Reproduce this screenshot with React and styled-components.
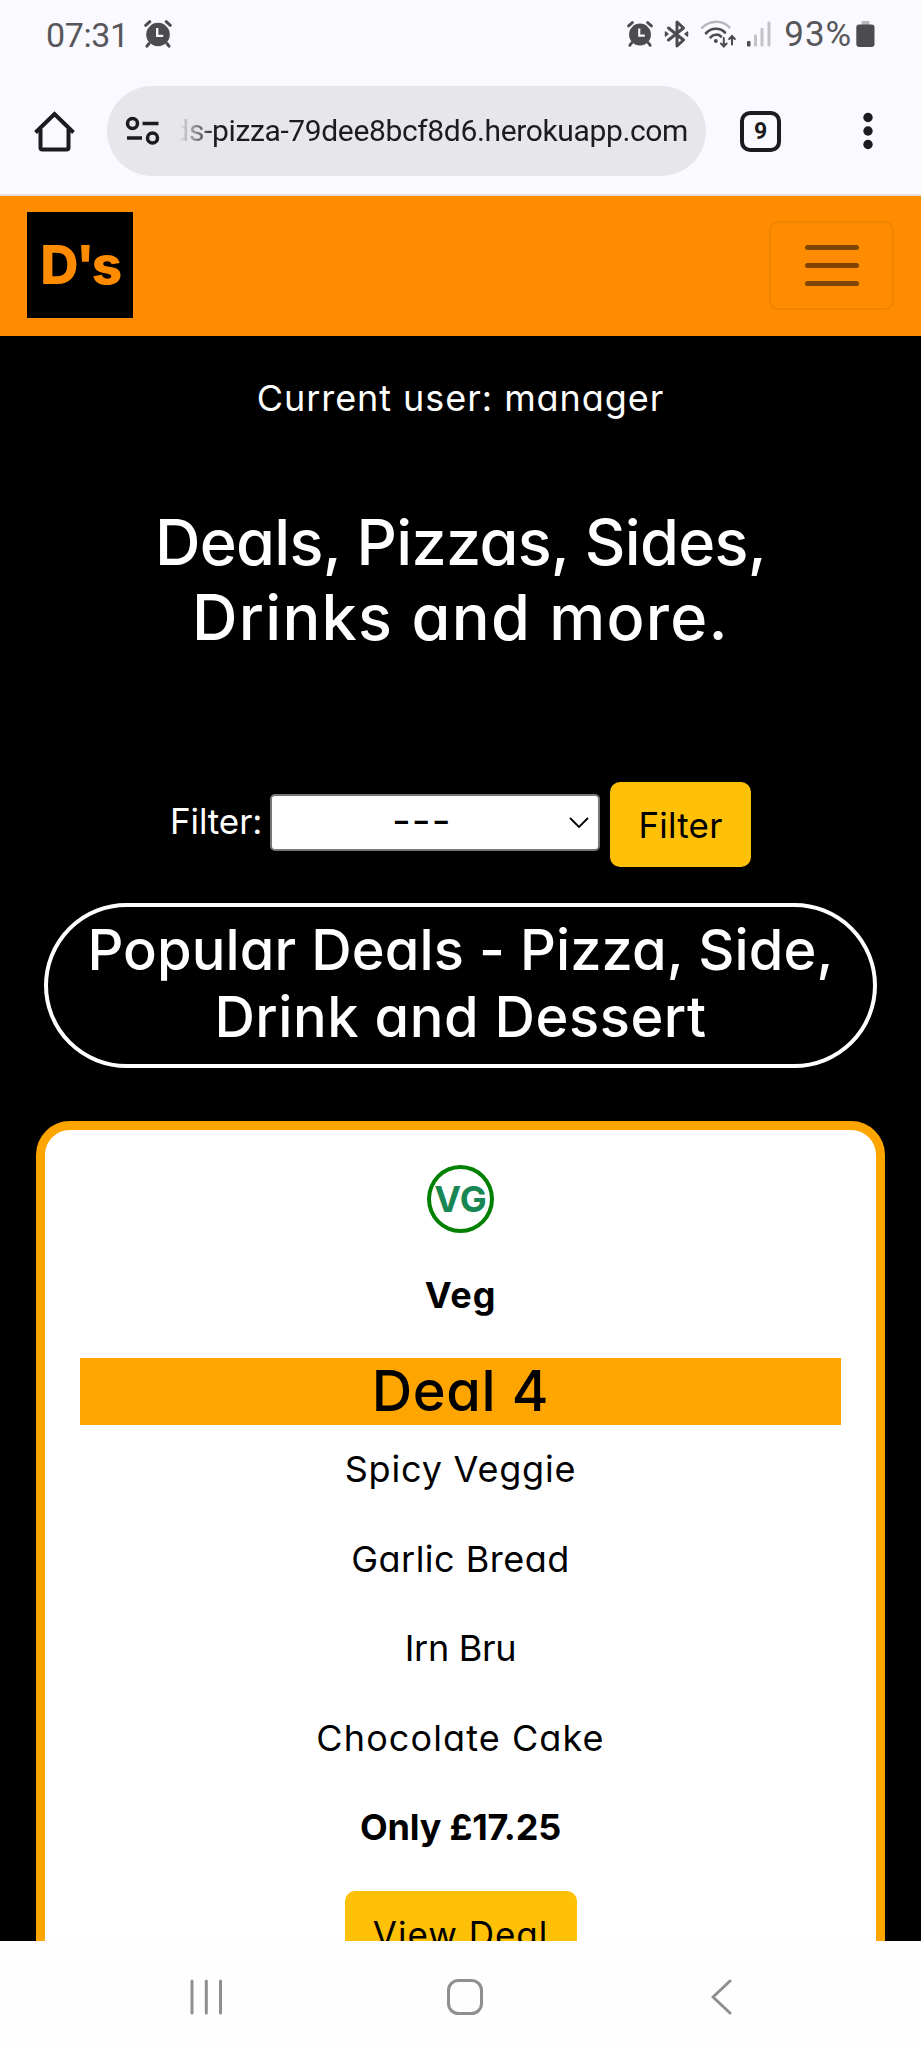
import React from 'react';
import styled, { createGlobalStyle } from 'styled-components';

const GlobalStyle = createGlobalStyle`
  * { box-sizing: border-box; }
  body { margin: 0; background: #000; }
`;

const Phone = styled.div`
  width: 921px;
  height: 2048px;
  display: flex;
  flex-direction: column;
  overflow: hidden;
  background: #000;
  font-family: Inter, 'Open Sans', sans-serif;
  font-feature-settings: 'cv11';
`;

const StatusBar = styled.header`
  height: 68px;
  flex: none;
  display: flex;
  align-items: center;
  padding: 0 46px;
  background: #faf9ff;
  color: #57575b;
  svg { display: block; flex: none; }
`;

const StatusText = styled.span`
  font: 400 ${(p) => p.$size}px/68px Roboto, sans-serif;
  letter-spacing: ${(p) => p.$track}px;
  margin: 0 ${(p) => p.$after}px 0 ${(p) => p.$before}px;
  padding-top: 1px;
  white-space: nowrap;
`;

const Spacer = styled.span`
  flex: 1;
`;

const StatusIcons = styled.div`
  display: flex;
  align-items: center;
  gap: 11px;
`;

const BrowserBar = styled.div`
  height: 128px;
  flex: none;
  display: flex;
  align-items: flex-start;
  padding: 18px 33px 0 34px;
  background: #faf9ff;
  border-bottom: 2px solid #eaddda;
  color: #1c1b20;
`;

const IconSlot = styled.div`
  width: ${(p) => p.$width}px;
  height: 90px;
  display: flex;
  align-items: center;
  svg { display: block; }
`;

const AddressPill = styled.div`
  width: 599px;
  height: 90px;
  display: flex;
  align-items: center;
  padding: 0 18px 0 18px;
  border-radius: 45px;
  background: #e7e6eb;
`;

const UrlText = styled.div`
  width: 519px;
  margin-left: 9px;
  display: flex;
  justify-content: flex-end;
  white-space: nowrap;
  font: 400 30px/44px Roboto, sans-serif;
  letter-spacing: ${(p) => p.$track}px;
  mask-image: linear-gradient(to right, transparent 10px, #000 46px);
`;

const TabCount = styled.div`
  width: 41px;
  height: 41px;
  border: 4px solid #1c1b20;
  border-radius: 10px;
  font: 700 23px/33px Roboto, sans-serif;
  text-align: center;
`;

const NavBar = styled.nav`
  height: 140px;
  flex: none;
  display: flex;
  align-items: center;
  justify-content: space-between;
  padding: 0 27px 2px;
  background: #ff8c00;
`;

const Logo = styled.div`
  width: 106px;
  height: 106px;
  background: #000;
  color: #ff8c00;
  font-weight: 800;
  font-size: 53px;
  line-height: 106px;
  text-align: center;
  letter-spacing: ${(p) => p.$track}px;
`;

const Toggler = styled.button`
  width: 125px;
  height: 89px;
  padding: 0;
  display: flex;
  flex-direction: column;
  align-items: center;
  justify-content: center;
  gap: 13px;
  border: 2px solid #f08300;
  border-radius: 9px;
  background: transparent;
`;

const TogglerBar = styled.span`
  width: 54px;
  height: 5px;
  border-radius: 3px;
  background: #7f4500;
`;

const Page = styled.main`
  flex: 1;
  min-height: 0;
  overflow: hidden;
  display: flex;
  flex-direction: column;
  align-items: center;
  color: #fff;
`;

const Line = styled.p`
  margin: 0;
  height: 54px;
  flex: none;
  font-size: 36px;
  line-height: 52px;
  font-weight: ${(p) => p.$weight || 400};
  letter-spacing: ${(p) => p.$track || 0}px;
  white-space: nowrap;
`;

const CurrentUser = styled(Line)`
  margin-top: 36px;
`;

const Title = styled.h1`
  flex: none;
  margin: 79px 0 0;
  font-size: 63px;
  line-height: 75px;
  font-weight: 500;
  text-align: center;
`;

const Tracked = styled.span`
  display: block;
  white-space: nowrap;
  letter-spacing: ${(p) => p.$track}px;
`;

const FilterForm = styled.form`
  flex: none;
  margin-top: 127px;
  width: 581px;
  display: flex;
  align-items: flex-start;
`;

const FilterLabel = styled.label`
  width: 100px;
  margin-top: 12px;
  font-size: 35px;
  line-height: 54px;
  letter-spacing: ${(p) => p.$track}px;
`;

const SelectBox = styled.div`
  width: 330px;
  height: 57px;
  margin-top: 12px;
  padding: 0 9px 0 120px;
  display: flex;
  align-items: center;
  justify-content: space-between;
  border: 2px solid #767676;
  border-radius: 5px;
  background: #fff;
  color: #000;
`;

const Dashes = styled.span`
  padding-bottom: 6px;
  font-size: 41px;
  line-height: 46px;
  letter-spacing: ${(p) => p.$track}px;
`;

const YellowButton = styled.button`
  width: ${(p) => p.$width}px;
  height: 85px;
  flex: none;
  padding: 0;
  border: 0;
  border-radius: 10px;
  background: #ffc107;
  color: #000;
  font: inherit;
  font-feature-settings: inherit;
  font-size: 35px;
  line-height: 84px;
  letter-spacing: ${(p) => p.$track}px;
`;

const SectionHeading = styled.h2`
  width: 833px;
  height: 165px;
  flex: none;
  margin: 36px 0 0;
  padding-top: 10px;
  border: 4px solid #fff;
  border-radius: 83px;
  font-size: 56px;
  line-height: 67px;
  font-weight: 500;
  text-align: center;
`;

const DealCard = styled.article`
  width: 849px;
  height: 1100px;
  flex: none;
  margin-top: 53px;
  padding: 35px 35px 0;
  display: flex;
  flex-direction: column;
  align-items: center;
  border: 9px solid #ffa500;
  border-radius: 34px;
  background: #fff;
  color: #000;
`;

const VegBadge = styled.div`
  width: 67px;
  height: 68px;
  flex: none;
  display: flex;
  justify-content: center;
  border: 4px solid #008000;
  border-radius: 50%;
  color: #198754;
  font-size: 36px;
  line-height: 61px;
  font-weight: 700;
  letter-spacing: ${(p) => p.$track}px;
`;

const DealType = styled(Line)`
  margin-top: 36px;
`;

const DealName = styled.h3`
  width: 761px;
  height: 67px;
  flex: none;
  margin: 35px 0 18px;
  background: #ffa500;
  font-size: 56px;
  line-height: 67px;
  font-weight: 500;
  text-align: center;
  letter-spacing: ${(p) => p.$track}px;
`;

const DealLines = styled.div`
  display: flex;
  flex-direction: column;
  align-items: center;
  gap: 35.6px;
  margin-bottom: 36px;
`;

const SystemNav = styled.footer`
  height: 107px;
  flex: none;
  display: flex;
  align-items: center;
  padding: 4px 189px 0 190px;
  justify-content: space-between;
  background: #fefefe;
  svg { display: block; }
`;

const HomeKey = styled.span`
  padding-right: 5px;
`;

const AlarmIcon = ({ size = 28 }) => (
  <svg width={size} height={size} viewBox="0 0 28 28" fill="none">
    <circle cx="14" cy="14.5" r="11.8" fill="#4c4c50" />
    <path d="M5.500 5 2.500 8M22.500 5l3 3" stroke="#faf9ff" strokeWidth="2" />
    <path d="M1.700 5.300 5.800 1.700M26.300 5.300 22.200 1.700M5 23.500 3 26.200M23 23.500l2 2.700" stroke="#4c4c50" strokeWidth="3" strokeLinecap="round" />
    <path d="M13.200 8v7.800h6" stroke="#faf9ff" strokeWidth="2.300" />
  </svg>
);

const BluetoothIcon = () => (
  <svg width="25" height="28" viewBox="0 0 25 28" fill="none" stroke="#4c4c50" strokeWidth="3" strokeLinejoin="round" strokeLinecap="round">
    <path d="M4.500 8 19.500 20 13 26V2l6.500 6L4.500 20" />
    <path d="M1.500 12 4 14l-2.500 2zM23.500 12 21 14l2.500 2z" fill="#4c4c50" strokeWidth="1.500" />
  </svg>
);

const WifiIcon = () => (
  <svg width="36" height="28" viewBox="0 0 36 28" fill="none" stroke="#4c4c50" strokeLinecap="round">
    <path d="M2 7.800C10-.300 22.500-.300 29.500 7.500" stroke="#b9b8bd" strokeWidth="2.400" />
    <path d="M6 13.200C11.500 7.400 20 7.400 25 12.500" strokeWidth="2.700" />
    <path d="M10.500 17.300C13.500 14 18.500 14 21 16.500" strokeWidth="2.700" />
    <circle cx="15.800" cy="21" r="2" fill="#4c4c50" stroke="none" />
    <path d="M23.800 18v8M21 23.500l2.800 3 2.800-3M32 24.500v-8M29.200 19l2.800-3 2.800 3" strokeWidth="2" />
  </svg>
);

const SignalIcon = () => (
  <svg width="24" height="26" viewBox="0 0 24 26">
    <rect x="0" y="20" width="3.500" height="5.500" rx="1" fill="#4c4c50" />
    <rect x="7" y="13.500" width="3" height="12" rx="1" fill="#c3c2c7" />
    <rect x="13.500" y="7" width="3" height="18.500" rx="1" fill="#c3c2c7" />
    <rect x="20.500" y="0.500" width="3" height="25" rx="1" fill="#c3c2c7" />
  </svg>
);

const BatteryIcon = () => (
  <svg width="19" height="26" viewBox="0 0 19 26">
    <rect x="5.500" y="0" width="8" height="6" rx="1" fill="#b9b8bd" />
    <rect x="0.300" y="3.500" width="18.200" height="22.500" rx="3" fill="#4c4c50" />
  </svg>
);

const HomeIcon = () => (
  <svg width="41" height="41" viewBox="0 0 41 41" fill="none" stroke="#1c1b20" strokeWidth="4" strokeLinejoin="round">
    <path d="M6.500 18v18.500q0 2 2 2h24q2 0 2-2V18" />
    <path d="M1.500 21.500 20.500 3l19 18.500" strokeLinejoin="miter" />
  </svg>
);

const TuneIcon = () => (
  <svg width="35" height="30" viewBox="0 0 35 30" fill="none" stroke="#1c1b20" strokeWidth="3.500">
    <circle cx="7.500" cy="7.500" r="5" />
    <path d="M17.500 7.500h16M2 22h15" />
    <circle cx="27.500" cy="22" r="5" />
  </svg>
);

const MoreIcon = () => (
  <svg width="10" height="38" viewBox="0 0 10 38" fill="#1c1b20">
    <circle cx="5" cy="5.500" r="4.700" />
    <circle cx="5" cy="19" r="4.700" />
    <circle cx="5" cy="32.500" r="4.700" />
  </svg>
);

const ChevronDown = () => (
  <svg width="20" height="12" viewBox="0 0 20 12" fill="none" stroke="#000" strokeWidth="1.800">
    <path d="m1 1 9 9 9-9" />
  </svg>
);

const RecentsIcon = () => (
  <svg width="33" height="36" viewBox="0 0 33 36" stroke="#8f8f8f" strokeWidth="3" strokeLinecap="round">
    <path d="M2 2v32M16.300 2v32M30.500 2v32" />
  </svg>
);

const HomeButtonIcon = () => (
  <svg width="36" height="36" viewBox="0 0 36 36" fill="none" stroke="#8f8f8f" strokeWidth="3">
    <rect x="1.500" y="1.500" width="33" height="33" rx="10" />
  </svg>
);

const BackIcon = () => (
  <svg width="21" height="36" viewBox="0 0 21 36" fill="none" stroke="#8f8f8f" strokeWidth="3" strokeLinecap="round" strokeLinejoin="round">
    <path d="M19 2 2 18l17 16" />
  </svg>
);

const dealItems = [
  { name: 'Spicy Veggie', track: 0.8 },
  { name: 'Garlic Bread', track: 0.5 },
  { name: 'Irn Bru', track: -0.3 },
  { name: 'Chocolate Cake', track: 1.1 },
];

export default function App() {
  return (
    <Phone>
      <GlobalStyle />
      <StatusBar>
        <StatusText $size={34} $track={-0.4} $before={0} $after={15}>07:31</StatusText>
        <AlarmIcon />
        <Spacer />
        <StatusIcons>
          <AlarmIcon size={26} />
          <BluetoothIcon />
          <WifiIcon />
          <SignalIcon />
        </StatusIcons>
        <StatusText $size={35} $track={0.9} $before={13} $after={4}>93%</StatusText>
        <BatteryIcon />
      </StatusBar>
      <BrowserBar>
        <IconSlot $width={73}><HomeIcon /></IconSlot>
        <AddressPill>
          <TuneIcon />
          <UrlText $track={-0.36}>ds-pizza-79dee8bcf8d6.herokuapp.com</UrlText>
        </AddressPill>
        <Spacer />
        <IconSlot $width={123}><TabCount>9</TabCount></IconSlot>
        <IconSlot $width={25}><MoreIcon /></IconSlot>
      </BrowserBar>
      <NavBar>
        <Logo $track={-2.5}>D's</Logo>
        <Toggler aria-label="Menu"><TogglerBar /><TogglerBar /><TogglerBar /></Toggler>
      </NavBar>
      <Page>
        <CurrentUser $track={0.95}>Current user: manager</CurrentUser>
        <Title>
          <Tracked $track={-0.7}>Deals, Pizzas, Sides,</Tracked>
          <Tracked $track={1.3}>Drinks and more.</Tracked>
        </Title>
        <FilterForm>
          <FilterLabel $track={-0.1}>Filter:</FilterLabel>
          <SelectBox><Dashes $track={1}>---</Dashes><ChevronDown /></SelectBox>
          <Spacer />
          <YellowButton type="button" $width={141} $track={0.2}>Filter</YellowButton>
        </FilterForm>
        <SectionHeading>
          <Tracked $track={0.1}>Popular Deals - Pizza, Side,</Tracked>
          <Tracked $track={0.55}>Drink and Dessert</Tracked>
        </SectionHeading>
        <DealCard>
          <VegBadge $track={0}>VG</VegBadge>
          <DealType $weight={700} $track={0.9}>Veg</DealType>
          <DealName $track={0.6}>Deal 4</DealName>
          <DealLines>
            {dealItems.map((item) => (
              <Line key={item.name} $track={item.track}>{item.name}</Line>
            ))}
            <Line $weight={700} $track={-0.2}>Only £17.25</Line>
          </DealLines>
          <YellowButton type="button" $width={232} $track={1}>View Deal</YellowButton>
        </DealCard>
      </Page>
      <SystemNav>
        <RecentsIcon />
        <HomeKey><HomeButtonIcon /></HomeKey>
        <BackIcon />
      </SystemNav>
    </Phone>
  );
}
